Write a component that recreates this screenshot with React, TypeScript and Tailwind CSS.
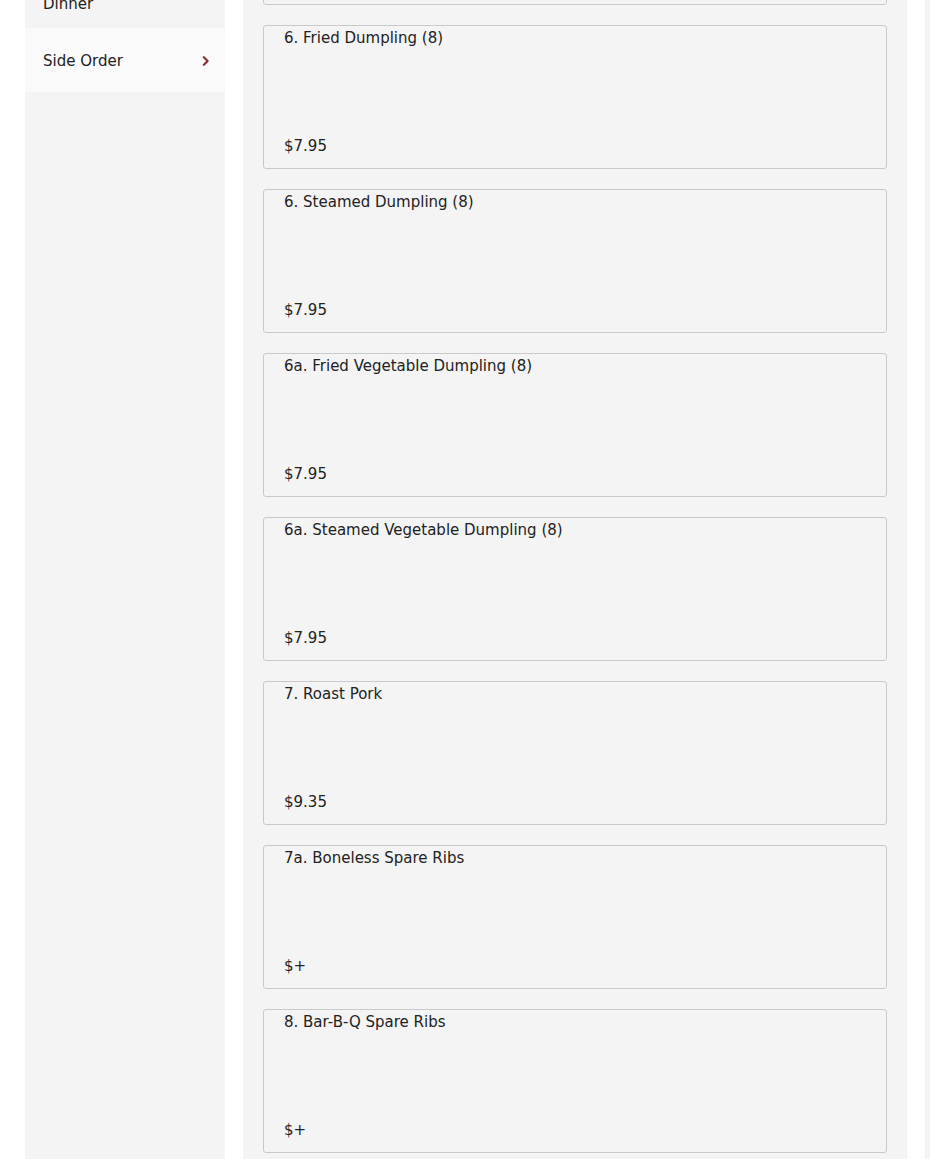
import React from 'react'

type Item = { name: string; price: string }

const items: Item[] = [
  { name: '5. Shrimp Egg Roll', price: '$2.25' },
  { name: '6. Fried Dumpling (8)', price: '$7.95' },
  { name: '6. Steamed Dumpling (8)', price: '$7.95' },
  { name: '6a. Fried Vegetable Dumpling (8)', price: '$7.95' },
  { name: '6a. Steamed Vegetable Dumpling (8)', price: '$7.95' },
  { name: '7. Roast Pork', price: '$9.35' },
  { name: '7a. Boneless Spare Ribs', price: '$+' },
  { name: '8. Bar-B-Q Spare Ribs', price: '$+' },
  { name: '9. Chicken Wings (6)', price: '$8.95' },
]

const Chevron: React.FC<{ className?: string }> = ({ className }) => (
  <svg viewBox="0 0 8 12" className={className} fill="none">
    <path d="M2 1.5 L6.5 6 L2 10.5" stroke="currentColor" strokeWidth="2.6" strokeLinecap="round" strokeLinejoin="round" />
  </svg>
)

const Card: React.FC<{ item: Item }> = ({ item }) => (
  <div className="h-[144px] border border-[#c9c9c9] rounded-[3px] bg-[#f4f4f4] px-5 pb-[10px] flex flex-col justify-between">
    <div className="text-[15px] leading-6 font-medium text-[#222]">{item.name}</div>
    <div className="text-[15px] leading-6 font-medium text-[#222]">{item.price}</div>
  </div>
)

export default function App() {
  return (
    <div className="h-[1159px] overflow-hidden bg-white" style={{ fontFamily: '"DejaVu Sans", sans-serif' }}>
      <div className="-mt-[159px] flex gap-[18px] pl-[25px]">

        {/* Categorías */}
        <div className="w-[200px] shrink-0 bg-[#f4f4f4] pt-[38px]">
          <div className="h-[63px] pl-[18px] pr-4 flex items-center justify-between text-[15px] text-[#222]">
            <span>Soup</span>
            <Chevron className="w-[7px] h-[10px] text-[#dcdcdc]" />
          </div>
          <div className="h-[86px] pl-[18px] pr-4 flex items-center justify-between text-[15px] leading-[22px] text-[#222]">
            <span className="w-[120px] mt-4">Combination Dinner</span>
            <Chevron className="w-[7px] h-[10px] text-[#dcdcdc]" />
          </div>
          <div className="h-[64px] pl-[18px] pr-4 pt-[2px] flex items-center justify-between text-[15px] text-[#222] bg-[#fafafa]">
            <span>Side Order</span>
            <Chevron className="w-[7px] h-[10px] text-[#8e2b2b]" />
          </div>
        </div>

        {/* Menú */}
        <div className="w-[664px] shrink-0 bg-[#f4f4f4] p-5 flex flex-col gap-5">
          {items.map((it, i) => (
            <Card key={i} item={it} />
          ))}
        </div>

        <div className="w-[40px] shrink-0 bg-[#f4f4f4]" />
      </div>
    </div>
  )
}
